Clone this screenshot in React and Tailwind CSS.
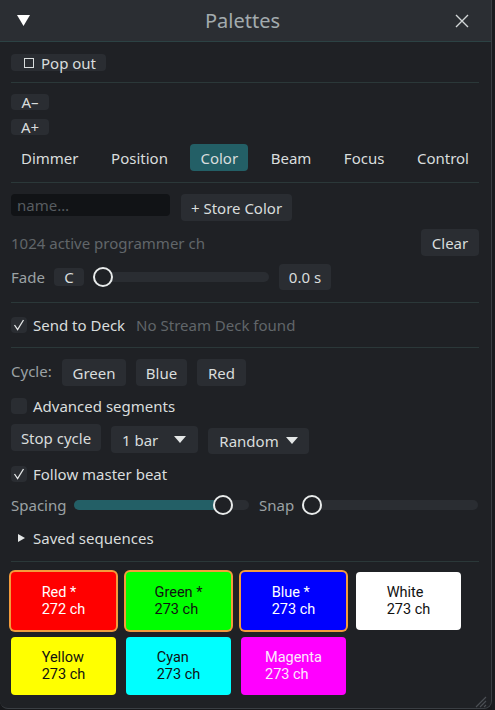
import React from "react";

const font = { fontFamily: '"Noto Sans", "Open Sans", sans-serif' };
const swatchFont = { fontFamily: 'Roboto, "Noto Sans", sans-serif' };

function Btn({ children, className = "" }) {
  return (
    <div
      className={`flex items-center justify-center rounded-[4px] bg-[#2a2d32] text-[#d9dddd] ${className}`}
    >
      {children}
    </div>
  );
}

function Check({ on }) {
  return (
    <div className="flex h-[16px] w-[16px] items-center justify-center rounded-[4px] bg-[#2a2d32]">
      {on && (
        <svg width="12" height="12" viewBox="0 0 12 12">
          <path d="M1.5 6 L4.6 10.5 L10.5 1" fill="none" stroke="#e4e7e7" strokeWidth="1.3" />
        </svg>
      )}
    </div>
  );
}

function Slider({ width, pos, fill }) {
  return (
    <div className="relative h-[10px] rounded-full bg-[#2a2d32]" style={{ width }}>
      {fill && (
        <div className="absolute left-0 top-0 h-[10px] rounded-full bg-[#235f66]" style={{ width: pos }} />
      )}
      <div
        className="absolute top-[-5px] h-[20px] w-[20px] rounded-full border-2 border-[#e8ebeb] bg-[#1f2125]"
        style={{ left: pos - 10 }}
      />
    </div>
  );
}

function Caret() {
  return (
    <svg width="12" height="8" viewBox="0 0 12 8">
      <polygon points="0,0 12,0 6,7" fill="#e4e7e7" />
    </svg>
  );
}

function Sep() {
  return <div className="h-px bg-[#2b3839]" />;
}

const swatches = [
  { name: "Red *", ch: "272 ch", bg: "bg-[#ff0000]", fg: "text-white", sel: true },
  { name: "Green *", ch: "273 ch", bg: "bg-[#00ff00]", fg: "text-[#111]", sel: true },
  { name: "Blue *", ch: "273 ch", bg: "bg-[#0000ff]", fg: "text-white", sel: true },
  { name: "White", ch: "273 ch", bg: "bg-white", fg: "text-[#111]", sel: false },
  { name: "Yellow", ch: "273 ch", bg: "bg-[#ffff00]", fg: "text-[#111]", sel: false },
  { name: "Cyan", ch: "273 ch", bg: "bg-[#00ffff]", fg: "text-[#111]", sel: false },
  { name: "Magenta", ch: "273 ch", bg: "bg-[#ff00ff]", fg: "text-[#fde8fd]", sel: false },
];

export default function App() {
  return (
    <div className="flex h-[710px] w-[495px] bg-[#17181b] text-[15px] leading-[20px]" style={font}>
      <div className="flex h-[709px] w-[492px] flex-col overflow-hidden rounded-b-[8px] border-r border-b border-[#3a3e43] bg-[#1f2125]">
        {/* title bar */}
        <div className="flex h-[42px] shrink-0 items-center justify-between border-b border-[#2c4244] bg-[#2b2e33] pl-[17px] pr-[22px]">
          <svg width="13" height="13" viewBox="0 0 13 13">
            <polygon points="0,1 13,1 6.5,12" fill="#ffffff" />
          </svg>
          <div className="text-[20px] text-[#a3abae]">Palettes</div>
          <svg width="14" height="14" viewBox="0 0 14 14">
            <path d="M1 1 L13 13 M13 1 L1 13" stroke="#d2d6d7" strokeWidth="1.4" />
          </svg>
        </div>

        <div className="flex flex-col pl-[11px] pr-[12px] text-[#d9dddd]">
          <Btn className="mt-[12px] h-[17px] w-[95px] gap-[7px] !justify-start pl-[13px]">
            <div className="h-[10px] w-[10px] border border-[#d9dddd]" />
            <span>Pop out</span>
          </Btn>
          <div className="mt-[11px]">
            <Sep />
          </div>
          <Btn className="mt-[11px] h-[16px] w-[38px]">A–</Btn>
          <Btn className="mt-[9px] h-[16px] w-[38px]">A+</Btn>

          {/* tabs */}
          <div className="mt-[9px] flex h-[27px] items-center justify-between">
            {["Dimmer", "Position", "Color", "Beam", "Focus", "Control"].map((t) => (
              <div
                key={t}
                className={`flex h-[27px] items-center rounded-[4px] px-[10px] ${
                  t === "Color" ? "bg-[#235f66]" : ""
                }`}
              >
                {t}
              </div>
            ))}
          </div>
          <div className="mt-[11px]">
            <Sep />
          </div>

          {/* store row */}
          <div className="mt-[11px] flex items-start gap-[11px]">
            <div className="flex h-[22px] w-[159px] items-center rounded-[4px] bg-[#111316] px-[6px] text-[#575c60]">
              name…
            </div>
            <Btn className="h-[27px] w-[111px]">+ Store Color</Btn>
          </div>
          <div className="mt-[8px] flex items-center justify-between">
            <span className="text-[#61666a]">1024 active programmer ch</span>
            <Btn className="h-[27px] w-[58px]">Clear</Btn>
          </div>

          {/* fade */}
          <div className="mt-[8px] flex h-[26px] items-center">
            <span className="w-[43px] text-[#9ba1a4]">Fade</span>
            <Btn className="h-[18px] w-[30px]">C</Btn>
            <div className="ml-[9px]">
              <Slider width={176} pos={10} />
            </div>
            <Btn className="ml-[10px] h-[26px] w-[52px]">0.0 s</Btn>
          </div>
          <div className="mt-[12px]">
            <Sep />
          </div>

          <div className="mt-[11px] flex h-[22px] items-center gap-[6px]">
            <Check on />
            <span>Send to Deck</span>
            <span className="ml-[5px] text-[#61666a]">No Stream Deck found</span>
          </div>
          <div className="mt-[11px]">
            <Sep />
          </div>

          {/* cycle */}
          <div className="mt-[11px] flex h-[27px] items-center gap-[10px]">
            <span className="mb-[3px] w-[41px] text-[#9ba1a4]">Cycle:</span>
            <Btn className="h-[27px] w-[64px]">Green</Btn>
            <Btn className="h-[27px] w-[51px]">Blue</Btn>
            <Btn className="h-[27px] w-[49px]">Red</Btn>
          </div>
          <div className="mt-[9px] flex h-[22px] items-center gap-[6px]">
            <Check />
            <span>Advanced segments</span>
          </div>
          <div className="mt-[7px] flex items-start gap-[10px]">
            <Btn className="h-[27px] w-[90px]">Stop cycle</Btn>
            <Btn className="mt-[2px] h-[27px] w-[87px] !justify-between pl-[11px] pr-[12px]">
              <span>1 bar</span>
              <Caret />
            </Btn>
            <Btn className="mt-[4px] h-[26px] w-[101px] gap-[7px]">
              <span>Random</span>
              <Caret />
            </Btn>
          </div>
          <div className="mt-[9px] flex h-[22px] items-center gap-[6px]">
            <Check on />
            <span>Follow master beat</span>
          </div>

          {/* spacing */}
          <div className="mt-[9px] flex h-[22px] items-center">
            <span className="w-[63px] text-[#9ba1a4]">Spacing</span>
            <Slider width={175} pos={149} fill />
            <span className="ml-[10px] w-[43px] text-[#9ba1a4]">Snap</span>
            <Slider width={176} pos={10} />
          </div>
          <div className="mt-[11px] flex h-[22px] items-center">
            <svg className="ml-[7px] mr-[8px]" width="7" height="8" viewBox="0 0 7 8">
              <polygon points="0,0 7,4 0,8" fill="#e4e7e7" />
            </svg>
            <span>Saved sequences</span>
          </div>
          <div className="mt-[12px]">
            <Sep />
          </div>

          {/* swatches */}
          <div
            className="mt-[10px] grid grid-cols-[repeat(4,105px)] gap-x-[10px] gap-y-[7px] text-[14.5px] leading-[17px]"
            style={swatchFont}
          >
            {swatches.map((s) => (
              <div
                key={s.name}
                className={`flex h-[58px] items-center justify-center rounded-[4px] ${s.bg} ${s.fg} ${
                  s.sel ? "ring-2 ring-[#f39c3c]" : ""
                }`}
              >
                <div>
                  <div>{s.name}</div>
                  <div>{s.ch}</div>
                </div>
              </div>
            ))}
          </div>

          <div className="flex justify-end">
            <svg className="mr-[-8px] mt-[-1px]" width="14" height="14" viewBox="0 0 14 14">
              <path d="M13 3 L3 13 M13 7 L7 13 M13 11 L11 13" stroke="#4a4e53" strokeWidth="1.2" />
            </svg>
          </div>
        </div>
      </div>
      <div className="flex-1 bg-[#1a1b1f]" />
    </div>
  );
}
